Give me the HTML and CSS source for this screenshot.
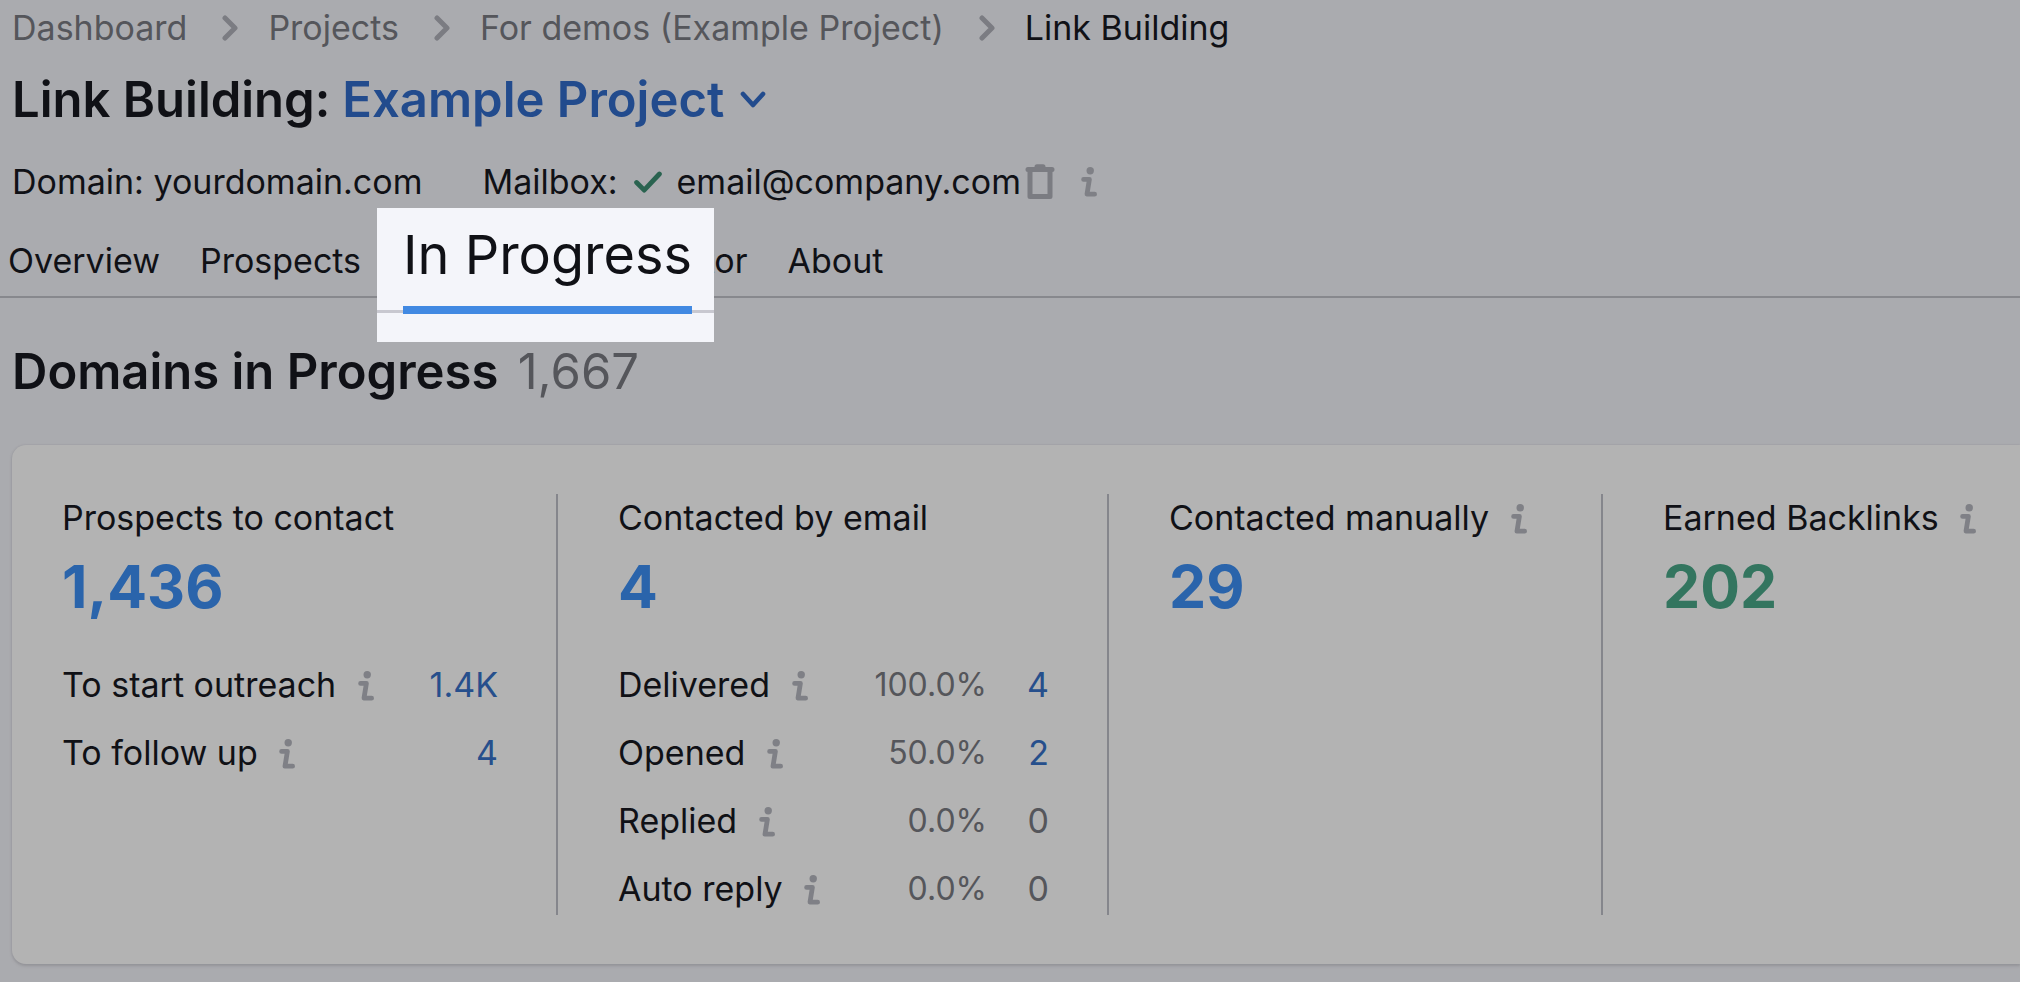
FILE: index.html
```html
<!DOCTYPE html>
<html lang="en">
<head>
  <meta charset="UTF-8">
  <meta name="viewport" content="width=device-width, initial-scale=1.0">
  <title>Link Building: Example Project</title>
  <link rel="stylesheet" href="styles.css">
</head>
<body>
  <!-- shared icons -->
  <svg class="sprite" aria-hidden="true">
    <symbol id="info" viewBox="0 0 16 30">
      <circle cx="9.2" cy="3.8" r="3.7" fill="currentColor"/>
      <path d="M2.6 12.4h5.8L6 27.2h7.6" fill="none" stroke="currentColor" stroke-width="4.8" stroke-linecap="round" stroke-linejoin="round"/>
    </symbol>
    <symbol id="chevron" viewBox="0 0 16 26">
      <path d="M3 3l10 10L3 23" fill="none" stroke="currentColor" stroke-width="5" stroke-linecap="round" stroke-linejoin="round"/>
    </symbol>
  </svg>

  <header class="header">
    <nav class="breadcrumbs" aria-label="Breadcrumbs">
      <a href="#">Dashboard</a>
      <svg class="chevron"><use href="#chevron"/></svg>
      <a href="#">Projects</a>
      <svg class="chevron"><use href="#chevron"/></svg>
      <a href="#">For demos (Example Project)</a>
      <svg class="chevron"><use href="#chevron"/></svg>
      <span class="current">Link Building</span>
    </nav>

    <h1 class="title">
      <span>Link Building:</span>
      <button type="button" class="project">Example Project
        <svg class="caret" viewBox="0 0 26 18"><path d="M3 3l10 11L23 3" fill="none" stroke="currentColor" stroke-width="4.6" stroke-linecap="round" stroke-linejoin="round"/></svg>
      </button>
    </h1>

    <div class="meta">
      <span>Domain: yourdomain.com</span>
      <div class="mailbox">
        <span>Mailbox:</span>
        <svg class="check" viewBox="0 0 28 22"><path d="M2.6 11.5l7.6 7.6L25.4 3" fill="none" stroke="currentColor" stroke-width="4.8" stroke-linecap="round" stroke-linejoin="round"/></svg>
        <span class="email">email@company.com</span>
        <button type="button" class="icon-button" aria-label="Remove mailbox">
          <svg class="trash" viewBox="0 0 30 36"><path d="M3 5.4h24M12 2.8h6" fill="none" stroke="currentColor" stroke-width="5" stroke-linecap="round"/><path d="M5 6v26.5h20V6" fill="none" stroke="currentColor" stroke-width="5" stroke-linejoin="round"/></svg>
        </button>
        <svg class="info mailbox-info"><use href="#info"/></svg>
      </div>
    </div>
  </header>

  <nav class="tabs">
    <a href="#">Overview</a>
    <a href="#">Prospects</a>
    <div class="active-tab">
      <div class="spotlight"><a href="#" aria-current="page">In Progress</a></div>
    </div>
    <a href="#">Monitor</a>
    <a href="#">About</a>
  </nav>

  <main class="main">
    <h2 class="heading">Domains in Progress <span class="total">1,667</span></h2>

    <div class="card">
      <section class="stat">
        <h3>Prospects to contact</h3>
        <a href="#" class="number">1,436</a>
        <table>
          <tr><th scope="row">To start outreach <svg class="info"><use href="#info"/></svg></th><td><a href="#">1.4K</a></td></tr>
          <tr><th scope="row">To follow up <svg class="info"><use href="#info"/></svg></th><td><a href="#">4</a></td></tr>
        </table>
      </section>
      <section class="stat">
        <h3>Contacted by email</h3>
        <a href="#" class="number">4</a>
        <table>
          <tr><th scope="row">Delivered <svg class="info"><use href="#info"/></svg></th><td class="percent">100.0%</td><td class="count"><a href="#">4</a></td></tr>
          <tr><th scope="row">Opened <svg class="info"><use href="#info"/></svg></th><td class="percent">50.0%</td><td class="count"><a href="#">2</a></td></tr>
          <tr><th scope="row">Replied <svg class="info"><use href="#info"/></svg></th><td class="percent">0.0%</td><td class="count">0</td></tr>
          <tr><th scope="row">Auto reply <svg class="info"><use href="#info"/></svg></th><td class="percent">0.0%</td><td class="count">0</td></tr>
        </table>
      </section>
      <section class="stat">
        <h3>Contacted manually <svg class="info"><use href="#info"/></svg></h3>
        <a href="#" class="number">29</a>
      </section>
      <section class="stat">
        <h3>Earned Backlinks <svg class="info"><use href="#info"/></svg></h3>
        <a href="#" class="number earned">202</a>
      </section>
    </div>
  </main>
</body>
</html>
```
FILE: styles.css
```css
* { box-sizing: border-box; }
body {
  margin: 0;
  background: #aaabaf;
  color: #101116;
  font-family: Inter, "Liberation Sans", sans-serif;
  font-size: 34px;
  line-height: 40px;
  white-space: nowrap;
  overflow-x: hidden;
}
h1, h2, h3 { margin: 0; }
a { color: inherit; text-decoration: none; }
button {
  padding: 0;
  border: 0;
  background: none;
  color: inherit;
  font: inherit;
  cursor: pointer;
}
.sprite {
  position: absolute;
  width: 0;
  height: 0;
}

.header { padding: 8px 12px 0; }
.breadcrumbs {
  display: flex;
  align-items: center;
  color: #55565b;
}
.chevron {
  width: 16px;
  height: 26px;
  margin: 0 30px 0 35px;
  color: #7b7c82;
}
.current { color: #101116; }

.title {
  display: flex;
  gap: 12px;
  margin-top: 22px;
  font-size: 49px;
  font-weight: 600;
  line-height: 60px;
}
.project {
  display: flex;
  align-items: center;
  gap: 16px;
  color: #224b8d;
}
.caret {
  width: 26px;
  height: 18px;
}

.meta {
  display: flex;
  gap: 60px;
  margin-top: 32px;
}
.mailbox {
  display: flex;
  align-items: center;
}
.check {
  width: 28px;
  height: 22px;
  margin: 0 15px 0 16px;
  color: #2a6350;
}
.icon-button {
  display: flex;
  margin-left: 4px;
}
.trash {
  width: 30px;
  height: 36px;
  color: #7b7c82;
}
.info {
  width: 16px;
  height: 30px;
  margin-left: 12px;
  color: #7f8086;
  vertical-align: -4px;
}
.mailbox-info { margin-left: 26px; }

.tabs {
  display: flex;
  gap: 40px;
  padding: 39px 8px 15px;
  border-bottom: 2px solid #87888d;
}
.active-tab {
  position: relative;
  width: 183px;
}
/* enlarged current tab, lies over its neighbours */
.spotlight {
  position: absolute;
  top: -33px;
  left: -24px;
  padding: 17px 22px 28px 26px;
  background: linear-gradient(#c8c8d0, #c8c8d0) 0 102px / 100% 3px no-repeat #f4f5fa;
}
.spotlight a {
  display: block;
  padding-bottom: 21px;
  border-bottom: 8px solid #4189e2;
  font-size: 54px;
  line-height: 60px;
}

.main { padding: 44px 0 18px 12px; }
.heading {
  font-size: 49px;
  font-weight: 600;
  line-height: 60px;
}
.total {
  margin-left: 7px;
  color: #55565b;
  font-weight: 400;
}

.card {
  display: grid;
  grid-template-columns: 546fr 551fr 494fr 417fr;
  margin-top: 43px;
  padding: 49px 0;
  border-radius: 14px 0 0 14px;
  background: #b3b3b3;
  box-shadow: 0 0 2px #95959c, 0 2px 3px #949498;
}
.stat {
  padding: 4px 58px 1px 60px;
  border-right: 2px solid #85868c;
}
.stat:first-child { padding-left: 50px; }
.stat:last-child {
  padding-right: 20px;
  border-right: 0;
}
.stat h3 {
  font-size: 34px;
  font-weight: 400;
}
.number {
  display: block;
  margin-top: 14px;
  color: #2a64ab;
  font-size: 59px;
  font-weight: 700;
  line-height: 70px;
}
.earned { color: #33755f; }

table {
  width: 100%;
  margin-top: 20px;
  border-collapse: collapse;
}
th, td {
  height: 68px;
  padding: 18px 0 0;
  font-weight: 400;
  text-align: left;
}
td {
  color: #55565b;
  text-align: right;
}
td a { color: #264f8c; }
.percent { font-size: 32px; }
.count { width: 62px; }
```
